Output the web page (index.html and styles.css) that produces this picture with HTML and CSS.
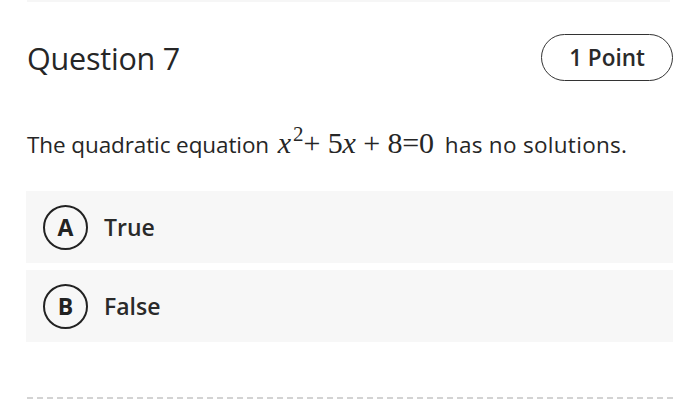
FILE: index.html
```html
<!DOCTYPE html>
<html>
<head>
<meta charset="utf-8">
<link rel="stylesheet" href="styles.css">
</head>
<body>
<div class="page">
  <div class="topline"></div>
  <div class="header">
    <h2 class="title">Question 7</h2>
    <span class="badge">1 Point</span>
  </div>
  <p class="prompt">The quadratic equation <span class="math"><i>x</i><sup>2</sup>+ 5<i>x</i> + 8=0</span> <span class="tail">has no solutions.</span></p>
  <div class="options">
    <div class="option"><span class="letter">A</span><span class="label">True</span></div>
    <div class="option"><span class="letter">B</span><span class="label">False</span></div>
  </div>
  <div class="dashed"></div>
</div>
</body>
</html>
```

FILE: styles.css
```css
* { box-sizing: border-box; }
html, body { margin: 0; padding: 0; background: #fff; }
body { font-family: "Open Sans", "Noto Sans", sans-serif; color: #262626; }
.page { width: 700px; height: 412px; padding: 0 27px 0 26px; display: flex; flex-direction: column; }
.topline { height: 2px; background: #f6f6f6; margin: 0 3px 0 1px; }
.header { display: flex; justify-content: space-between; align-items: center; margin-top: 32px; height: 47px; }
.title { margin: 0 0 0 1px; font-size: 30.5px; font-weight: 400; letter-spacing: -0.2px; }
.badge { border: 1.5px solid #333; border-radius: 24px; height: 47px; width: 132px; display: flex; align-items: center; justify-content: center; font-size: 22.5px; font-weight: 600; color: #2a2a2a; padding-bottom: 1px; }
.prompt { margin: 50px 0 0 1px; font-size: 22.5px; line-height: 28px; height: 28px; letter-spacing: -0.1px; }
.math { font-family: "Liberation Serif", "Times New Roman", serif; font-size: 30px; line-height: 20px; margin: 0 5px 0 3px; }
.math sup { font-size: 21px; vertical-align: baseline; position: relative; top: -12px; line-height: 0; margin-left: 2px; }
.tail { letter-spacing: 0.3px; }
.options { margin-top: 32px; display: flex; flex-direction: column; gap: 7px; }
.option { background: #f7f7f7; height: 72px; display: flex; align-items: center; padding-left: 17px; }
.letter { width: 45px; height: 45px; border: 2.5px solid #222; border-radius: 50%; display: flex; align-items: center; justify-content: center; font-weight: 700; font-size: 23px; color: #222; padding-bottom: 1px; }
.label { margin-left: 16px; font-size: 23px; font-weight: 600; color: #2a2a2a; }
.dashed { margin-top: 55px; border-top: 2px dashed #d3d3d3; margin-left: 1px; margin-right: 0; }
```
